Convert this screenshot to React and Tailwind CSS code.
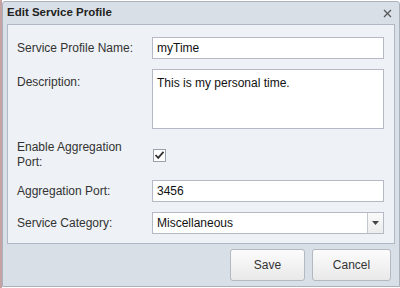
import React from 'react';

const font = { fontFamily: '"Liberation Sans", Arial, sans-serif' };

function TextInput({ value }) {
  return (
    <div className="flex-1 h-[22px] bg-white border border-[#b5b9c6] px-[4px] flex items-center text-[12px] text-[#111]">
      {value}
    </div>
  );
}

export default function App() {
  return (
    <div className="w-[400px] h-[288px] bg-white flex overflow-hidden" style={font}>
      <div className="w-[2px] h-full bg-[#c7a2a2]" />
      <div className="flex-1 mt-px mb-px flex flex-col bg-[#d9dfe7] border border-[#aab2be] rounded-t-[3px]">
        {/* title bar */}
        <div className="h-[22px] flex items-center justify-between pl-[4px] pr-[7px]">
          <span className="text-[11.5px] font-bold text-[#222]">Edit Service Profile</span>
          <svg width="9" height="9" viewBox="0 0 9 9" className="text-[#555]">
            <path d="M1 1L8 8M8 1L1 8" stroke="currentColor" strokeWidth="1.2" />
          </svg>
        </div>

        {/* form panel */}
        <div className="mx-[4px] bg-[#eef1f5] border border-[#b0b8c4] pt-[12px] pb-[9px] pl-[9px] pr-[10px] flex flex-col text-[12px] text-[#333]">
          <div className="flex items-center h-[22px]">
            <span className="w-[135px]">Service Profile Name:</span>
            <TextInput value="myTime" />
          </div>

          <div className="flex mt-[10px]">
            <span className="w-[135px] pt-[4px]">Description:</span>
            <div className="flex-1 h-[60px] bg-white border border-[#b5b9c6] px-[4px] pt-[4px] text-[12px] text-[#111]">
              This is my personal time.
            </div>
          </div>

          <div className="flex items-center mt-[11px]">
            <span className="w-[135px] leading-[15px]">Enable Aggregation<br />Port:</span>
            <div className="w-[13px] h-[13px] bg-white border border-[#9aa1ae] flex items-center justify-center ml-px">
              <svg width="11" height="10" viewBox="0 0 11 10">
                <path d="M1.5 5L4.2 7.8L9.5 1.8" fill="none" stroke="#333" strokeWidth="1.8" />
              </svg>
            </div>
          </div>

          <div className="flex items-center h-[22px] mt-[10px]">
            <span className="w-[135px]">Aggregation Port:</span>
            <TextInput value="3456" />
          </div>

          <div className="flex items-center h-[22px] mt-[10px]">
            <span className="w-[135px]">Service Category:</span>
            <div className="flex-1 h-[22px] bg-white border border-[#b5b9c6] flex items-stretch">
              <span className="flex-1 px-[4px] flex items-center text-[#111]">Miscellaneous</span>
              <div className="w-[16px] border-l border-[#c3c7d0] bg-gradient-to-b from-[#fafafa] to-[#ececec] flex items-center justify-center">
                <svg width="7" height="4" viewBox="0 0 7 4">
                  <path d="M0 0H7L3.5 4Z" fill="#444" />
                </svg>
              </div>
            </div>
          </div>
        </div>

        {/* buttons */}
        <div className="flex justify-end gap-[7px] pt-[5px] pr-[8px]">
          <button className="w-[75px] h-[32px] rounded-[3px] border border-[#b3b8c1] bg-gradient-to-b from-[#fcfcfc] to-[#e9e9e9] text-[12px] text-[#333]">
            Save
          </button>
          <button className="w-[79px] h-[32px] rounded-[3px] border border-[#b3b8c1] bg-gradient-to-b from-[#fcfcfc] to-[#e9e9e9] text-[12px] text-[#333]">
            Cancel
          </button>
        </div>
      </div>
    </div>
  );
}
